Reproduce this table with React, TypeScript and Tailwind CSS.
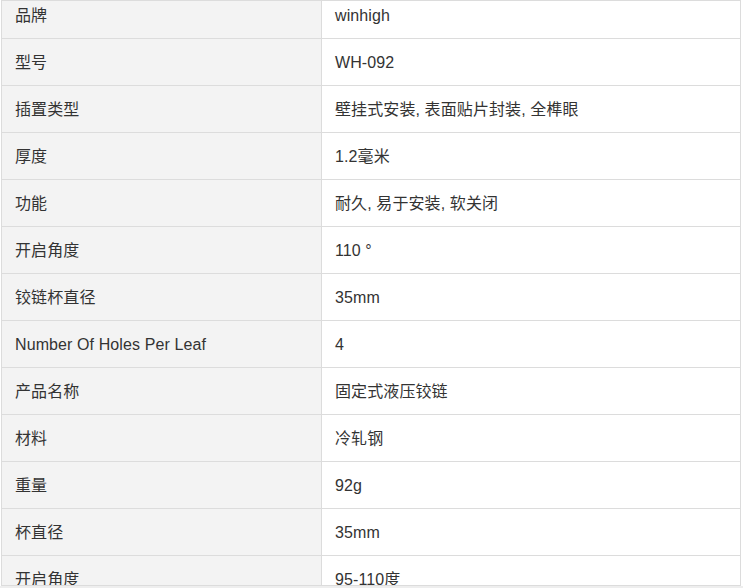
const rows: [string, string][] = [
  ['品牌', 'winhigh'],
  ['型号', 'WH-092'],
  ['插置类型', '壁挂式安装, 表面贴片封装, 全榫眼'],
  ['厚度', '1.2毫米'],
  ['功能', '耐久, 易于安装, 软关闭'],
  ['开启角度', '110 °'],
  ['铰链杯直径', '35mm'],
  ['Number Of Holes Per Leaf', '4'],
  ['产品名称', '固定式液压铰链'],
  ['材料', '冷轧钢'],
  ['重量', '92g'],
  ['杯直径', '35mm'],
  ['开启角度', '95-110度'],
];

export default function App() {
  return (
    <div
      className="w-[743px] h-[588px] bg-white overflow-hidden"
      style={{ fontFamily: '"Liberation Sans", Arial, "Noto Sans CJK SC", sans-serif' }}
    >
      <div className="ml-px w-[740px] h-[586px] border-t border-x border-b border-[#dcdcdc] overflow-hidden">
        <div className="-mt-[9px]">
          {rows.map(([k, v], i) => (
            <div key={i} className="grid grid-cols-[320px_1fr] h-[47px] border-b border-[#dcdcdc] text-[16px] text-[#333] tracking-[0.1px]">
              <div className="bg-[#f3f3f3] border-r border-[#dcdcdc] flex items-center pl-[13px] pt-[2px]">{k}</div>
              <div className="flex items-center pl-[13px] pt-[2px]">{v}</div>
            </div>
          ))}
        </div>
      </div>
      <div className="h-[2px] bg-[#eeeeee]" />
    </div>
  );
}
